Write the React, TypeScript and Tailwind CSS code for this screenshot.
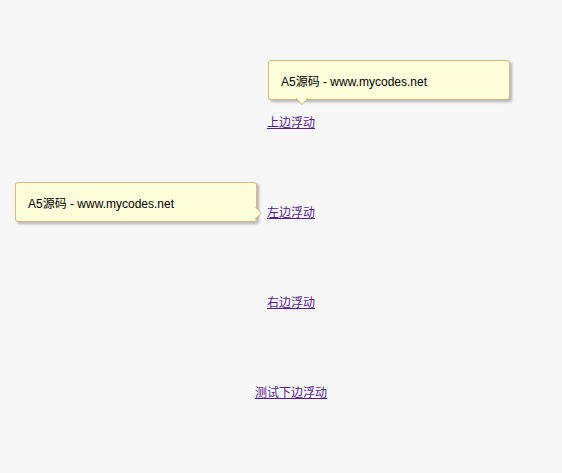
import * as React from "react";

const FONT = { fontFamily: '"Liberation Sans", Arial, "Noto Sans CJK SC", sans-serif' };

function Tip({ side }: { side: "top" | "left" }) {
  return (
    <div
      className={
        "absolute w-[242px] h-[40px] rounded-[3px] border border-[#d8b97f] bg-[#ffffdb] shadow-[2px_2px_3px_rgba(0,0,0,0.28)] pl-[12px] pt-[14px] text-[12px] leading-[14px] text-black whitespace-nowrap " +
        (side === "top" ? "left-[1px] bottom-[calc(100%+16px)]" : "right-[calc(100%+10px)] top-[-24px]")
      }
    >
      A5源码 - www.mycodes.net
      {side === "top" ? (
        <svg className="absolute left-[27px] bottom-[-7px]" width="12" height="8" viewBox="0 0 12 8">
          <polygon points="0,0 12,0 6,6.5" fill="#ffffdb" />
          <polyline points="0,0 6,6.5 12,0" fill="none" stroke="#d8b97f" strokeWidth="1" />
        </svg>
      ) : (
        <svg className="absolute right-[-7px] top-[24px]" width="8" height="12" viewBox="0 0 8 12">
          <polygon points="0,0 0,12 6.5,6" fill="#ffffdb" />
          <polyline points="0,0 6.5,6 0,12" fill="none" stroke="#d8b97f" strokeWidth="1" />
        </svg>
      )}
    </div>
  );
}

function Item({ label, tip }: { label: string; tip?: "top" | "left" }) {
  return (
    <div className="flex justify-center pl-[20px] text-[12px] leading-[14px]">
      <span className="relative block h-[14px]">
        {tip && <Tip side={tip} />}
        <a href="#" className="text-[#551a8b] underline">
          {label}
        </a>
      </span>
    </div>
  );
}

export default function App() {
  return (
    <div className="min-h-[473px] w-full bg-[#f7f7f7]" style={FONT}>
      <div className="flex flex-col gap-[76px] pt-[116px]">
        <Item label="上边浮动" tip="top" />
        <Item label="左边浮动" tip="left" />
        <Item label="右边浮动" />
        <Item label="测试下边浮动" />
      </div>
    </div>
  );
}
